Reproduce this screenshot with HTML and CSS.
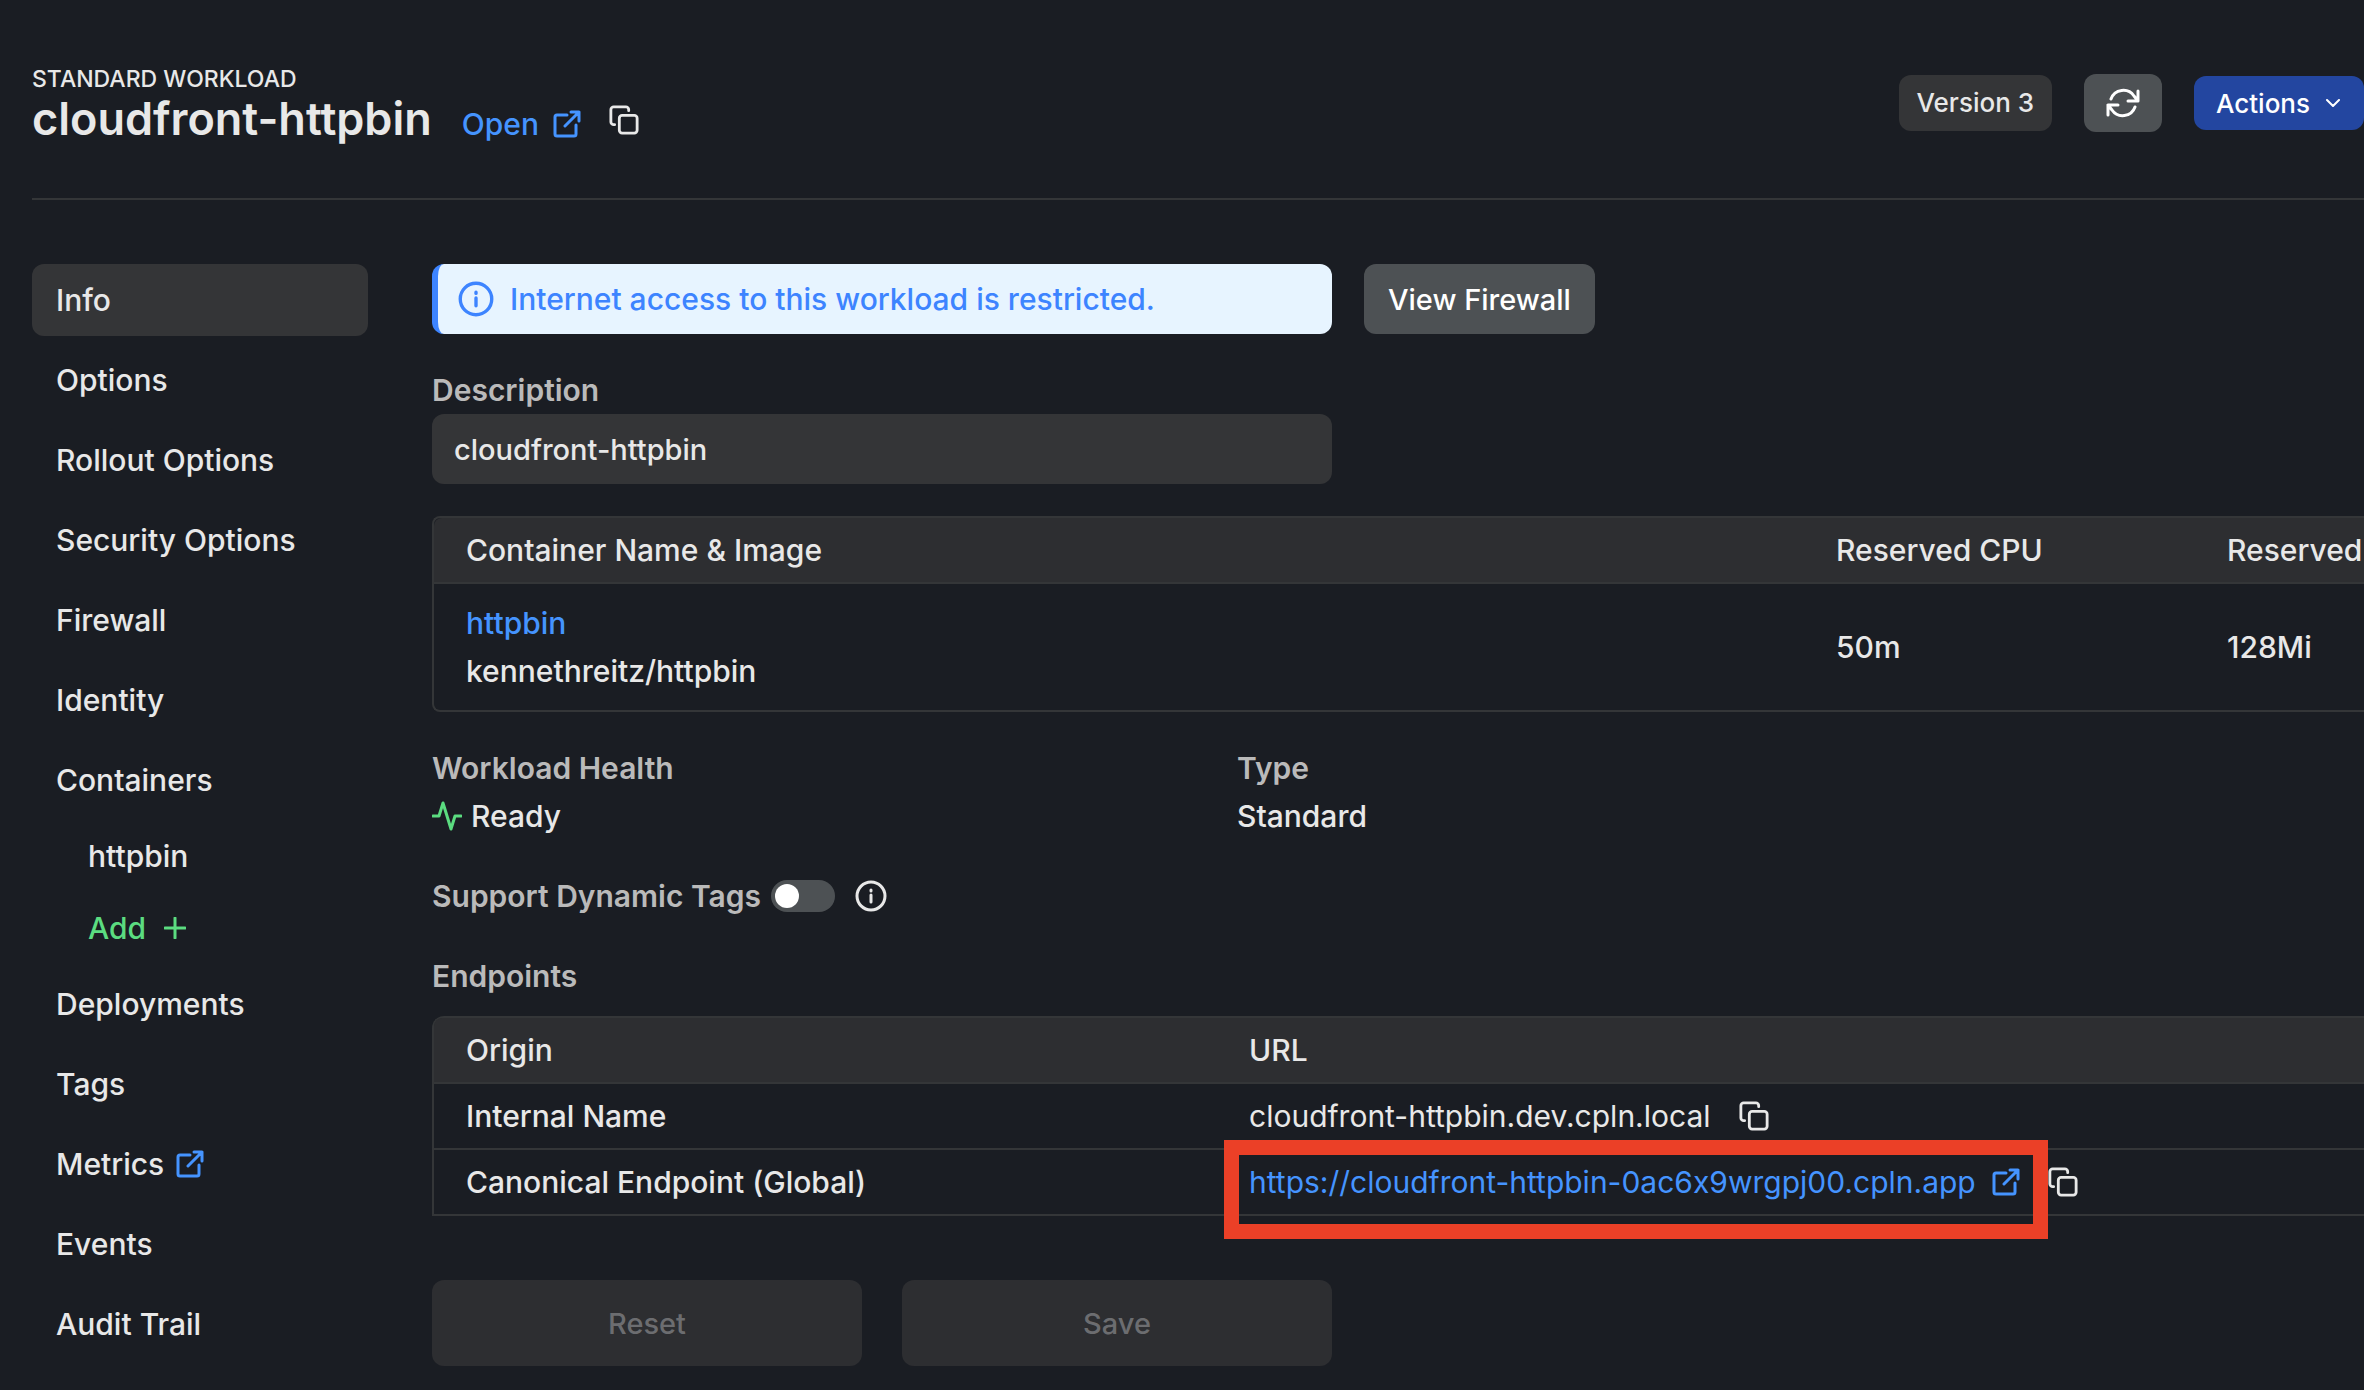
FILE: index.html
```html
<!DOCTYPE html>
<html lang="en">
<head>
  <meta charset="UTF-8">
  <title>cloudfront-httpbin - Workload</title>
  <link rel="stylesheet" href="styles.css">
</head>
<body>

  <!-- shared icons -->
  <svg class="sprite" aria-hidden="true">
    <symbol id="icon-external" viewBox="0 0 28 28">
      <path d="M14 5H4a2 2 0 0 0-2 2v17a2 2 0 0 0 2 2h17a2 2 0 0 0 2-2V15M12 16 26 2M18 2h8v9"/>
    </symbol>
    <symbol id="icon-copy" viewBox="0 0 32 32">
      <rect x="11" y="11" width="19" height="19" rx="3"/>
      <path d="M6 21H5a3 3 0 0 1-3-3V5a3 3 0 0 1 3-3h13a3 3 0 0 1 3 3v1"/>
    </symbol>
    <symbol id="icon-info" viewBox="0 0 32 32">
      <circle cx="16" cy="16" r="14"/>
      <path d="M16 15v7M16 10v1"/>
    </symbol>
  </svg>

  <header class="page-header">
    <div>
      <div class="kind">STANDARD WORKLOAD</div>
      <div class="title-row">
        <h1>cloudfront-httpbin</h1>
        <a class="link open-link" href="#">Open <svg class="icon-external"><use href="#icon-external"/></svg></a>
        <button class="icon-btn" aria-label="Copy name"><svg class="icon-copy"><use href="#icon-copy"/></svg></button>
      </div>
    </div>
    <div class="header-actions">
      <span class="version">Version 3</span>
      <button class="refresh-btn" aria-label="Refresh">
        <svg class="icon-refresh" viewBox="0 0 34 30">
          <path d="M5 11A13 13 0 0 1 28 8l4 5M32 3v10H22M29 19A13 13 0 0 1 6 22l-4-5M2 27V17h10"/>
        </svg>
      </button>
      <button class="actions-btn">Actions
        <svg class="icon-chevron" viewBox="0 0 14 8"><path d="m1 1 6 6 6-6"/></svg>
      </button>
    </div>
  </header>

  <div class="layout">
    <nav class="sidebar">
      <a class="active" href="#">Info</a>
      <a href="#">Options</a>
      <a href="#">Rollout Options</a>
      <a href="#">Security Options</a>
      <a href="#">Firewall</a>
      <a href="#">Identity</a>
      <a href="#">Containers</a>
      <a class="sub" href="#">httpbin</a>
      <a class="sub add" href="#">Add <svg class="icon-plus" viewBox="0 0 22 22"><path d="M11 1v20M1 11h20"/></svg></a>
      <a href="#">Deployments</a>
      <a href="#">Tags</a>
      <a href="#">Metrics <svg class="icon-external"><use href="#icon-external"/></svg></a>
      <a href="#">Events</a>
      <a href="#">Audit Trail</a>
    </nav>

    <main class="content">
      <div class="alert-row">
        <div class="alert">
          <svg class="icon-alert"><use href="#icon-info"/></svg>
          Internet access to this workload is restricted.
        </div>
        <button class="firewall-btn">View Firewall</button>
      </div>

      <div class="field">
        <label for="description">Description</label>
        <input type="text" id="description" value="cloudfront-httpbin">
      </div>

      <div class="table-box">
        <table class="containers">
          <thead>
            <tr>
              <th>Container Name &amp; Image</th>
              <th>Reserved CPU</th>
              <th>Reserved</th>
            </tr>
          </thead>
          <tbody>
            <tr>
              <td><a class="link" href="#">httpbin</a><br>kennethreitz/httpbin</td>
              <td>50m</td>
              <td>128Mi</td>
            </tr>
          </tbody>
        </table>
      </div>

      <div class="status">
        <div>
          <div class="label">Workload Health</div>
          <div class="ready">
            <svg class="icon-activity" viewBox="0 0 30 30"><path d="M1 15h6l4-13 8 26 4-13h6"/></svg>
            Ready
          </div>
        </div>
        <div>
          <div class="label">Type</div>
          <div>Standard</div>
        </div>
      </div>

      <div class="switch-row">
        <label for="dynamicTags">Support Dynamic Tags</label>
        <input type="checkbox" class="switch" id="dynamicTags">
        <svg class="icon-info"><use href="#icon-info"/></svg>
      </div>

      <h2 class="label">Endpoints</h2>

      <div class="table-box endpoints-box">
        <table class="endpoints">
          <thead>
            <tr>
              <th>Origin</th>
              <th>URL</th>
            </tr>
          </thead>
          <tbody>
            <tr>
              <td>Internal Name</td>
              <td>
                <div class="url">
                  cloudfront-httpbin.dev.cpln.local
                  <button class="icon-btn" aria-label="Copy internal name"><svg class="icon-copy"><use href="#icon-copy"/></svg></button>
                </div>
              </td>
            </tr>
            <tr>
              <td>Canonical Endpoint (Global)</td>
              <td>
                <div class="url">
                  <a class="link highlighted" href="#">https://cloudfront-httpbin-0ac6x9wrgpj00.cpln.app <svg class="icon-external"><use href="#icon-external"/></svg></a>
                  <button class="icon-btn" aria-label="Copy endpoint"><svg class="icon-copy"><use href="#icon-copy"/></svg></button>
                </div>
              </td>
            </tr>
          </tbody>
        </table>
      </div>

      <div class="form-buttons">
        <button disabled>Reset</button>
        <button disabled>Save</button>
      </div>
    </main>
  </div>

</body>
</html>
```
FILE: styles.css
```css
:root {
  --bg-color: #1a1d23;
  --panel-color: #343537;
  --head-color: #2d2e31;
  --border-color: #343638;
  --button-color: #4d5154;
  --text-color: #e8e8e8;
  --muted-color: #bababa;
  --link-color: #4594ff;
  --alert-color: #3d84ff;
  --green-color: #5bdc80;
}

* {
  box-sizing: border-box;
}

body {
  margin: 0;
  background-color: var(--bg-color);
  color: var(--text-color);
  font-family: Inter, "Open Sans", sans-serif;
  font-size: 30px;
  font-weight: 500;
  /* keeps the x in host names a letter */
  font-feature-settings: "calt" 0;
  line-height: 48px;
}

h1, h2 {
  margin: 0;
}

button, input {
  font-family: inherit;
  font-size: 29px;
  font-weight: inherit;
  font-feature-settings: inherit;
  color: inherit;
  border: none;
}

button {
  padding: 0;
  cursor: pointer;
}

a {
  color: inherit;
  text-decoration: none;
}

svg {
  fill: none;
  stroke: currentColor;
  stroke-width: 3;
  stroke-linecap: round;
  stroke-linejoin: round;
  flex-shrink: 0;
}

.sprite {
  display: none;
}

.link {
  color: var(--link-color);
}

.icon-external {
  width: 28px;
  height: 28px;
  color: var(--link-color);
}

.icon-copy {
  display: block;
  width: 30px;
  height: 30px;
}

.icon-btn {
  background: none;
}

/* Header */
.page-header {
  display: flex;
  justify-content: space-between;
  align-items: flex-start;
  margin-left: 32px;
  padding: 64px 0 48px;
  border-bottom: 2px solid var(--border-color);
}

.kind {
  font-size: 23px;
  line-height: 30px;
}

.title-row {
  display: flex;
  align-items: baseline;
  height: 56px;
}

h1 {
  font-size: 45px;
  font-weight: 600;
  line-height: 50px;
}

.open-link {
  display: flex;
  align-items: center;
  gap: 14px;
  margin: 0 28px 0 30px;
}

.header-actions {
  display: flex;
  align-items: center;
  gap: 32px;
  padding-top: 10px;
}

.version,
.actions-btn {
  font-size: 26px;
  border-radius: 12px;
}

.version {
  padding: 4px 18px;
  background-color: var(--panel-color);
}

.refresh-btn {
  display: flex;
  align-items: center;
  justify-content: center;
  width: 78px;
  height: 58px;
  border-radius: 12px;
  background-color: var(--button-color);
  color: white;
}

.icon-refresh {
  width: 34px;
  height: 30px;
}

.actions-btn {
  display: flex;
  align-items: center;
  gap: 16px;
  height: 54px;
  padding: 0 24px 0 22px;
  background-color: #2346a0;
  color: white;
}

.icon-chevron {
  width: 14px;
  height: 8px;
  stroke-width: 2;
}

/* Layout */
.layout {
  display: flex;
  gap: 64px;
  padding: 64px 0 24px 32px;
}

.sidebar {
  display: flex;
  flex-direction: column;
  gap: 8px;
  flex: 0 0 336px;
}

.sidebar a {
  display: flex;
  align-items: center;
  gap: 12px;
  padding: 12px 24px;
  border-radius: 12px;
}

.sidebar .active {
  background-color: var(--panel-color);
}

.sidebar .sub {
  padding: 8px 56px;
}

.sidebar .add {
  gap: 18px;
  color: var(--green-color);
}

.icon-plus {
  width: 22px;
  height: 22px;
}

.content {
  flex: 1;
  min-width: 0;
}

/* Alert */
.alert-row {
  display: flex;
  gap: 32px;
}

.alert {
  display: flex;
  align-items: center;
  gap: 16px;
  width: 900px;
  height: 70px;
  padding-left: 20px;
  border-left: 6px solid var(--alert-color);
  border-radius: 12px;
  background-color: #e7f4ff;
  color: var(--alert-color);
}

.icon-alert {
  width: 36px;
  height: 36px;
}

.firewall-btn {
  padding: 0 24px;
  border-radius: 12px;
  background-color: var(--button-color);
  color: white;
}

/* Description */
.field {
  width: 900px;
  margin: 32px 0;
}

label,
.label {
  display: block;
  color: var(--muted-color);
  font-size: 30px;
  font-weight: 600;
}

.field input {
  display: block;
  width: 100%;
  height: 70px;
  padding: 0 22px;
  border-radius: 12px;
  background-color: var(--panel-color);
}

/* Tables, open on the right side */
.table-box {
  border: 2px solid var(--border-color);
  border-right: none;
  border-radius: 8px 0 0 8px;
}

table {
  width: 100%;
  table-layout: fixed;
  border-collapse: collapse;
}

th, td {
  padding: 8px 0 8px 32px;
  text-align: left;
  font-weight: 500;
  white-space: nowrap;
}

th {
  background-color: var(--head-color);
}

th:first-child {
  border-top-left-radius: 8px;
}

tbody tr {
  border-top: 2px solid var(--border-color);
}

.containers td {
  padding: 15px 0 15px 32px;
}

.containers th:first-child {
  width: 1370px;
}

.containers th:nth-child(2) {
  width: 391px;
}

.endpoints th:first-child {
  width: 783px;
}

.endpoints-box {
  margin-top: 16px;
  border-radius: 12px 0 0 0;
}

.url {
  display: flex;
  align-items: center;
  gap: 28px;
  font-weight: 400;
}

.url .link {
  display: flex;
  align-items: center;
  gap: 16px;
}

.highlighted {
  position: relative;
}

/* Red frame over the endpoint */
.highlighted::after {
  content: "";
  position: absolute;
  top: -18px;
  right: -28px;
  bottom: -33px;
  left: -25px;
  border: 15px solid #eb4027;
}

/* Status */
.status {
  display: grid;
  grid-template-columns: 805px 1fr;
  margin: 32px 0;
}

.ready {
  display: flex;
  align-items: center;
  gap: 9px;
}

.icon-activity {
  width: 30px;
  height: 30px;
  color: var(--green-color);
}

.switch-row {
  display: flex;
  align-items: center;
  margin-bottom: 32px;
}

.switch {
  appearance: none;
  display: flex;
  align-items: center;
  width: 64px;
  height: 32px;
  margin: 0 20px 0 10px;
  padding: 4px;
  border-radius: 16px;
  background-color: var(--button-color);
  cursor: pointer;
}

.switch::before {
  content: "";
  width: 24px;
  height: 24px;
  border-radius: 50%;
  background-color: white;
}

.switch:checked {
  justify-content: flex-end;
}

.icon-info {
  width: 32px;
  height: 32px;
}

/* Form buttons */
.form-buttons {
  display: flex;
  gap: 40px;
  width: 900px;
  margin-top: 64px;
}

.form-buttons button {
  flex: 1;
  height: 86px;
  border-radius: 12px;
  background-color: var(--head-color);
  color: #6c6d70;
  cursor: default;
}
```
